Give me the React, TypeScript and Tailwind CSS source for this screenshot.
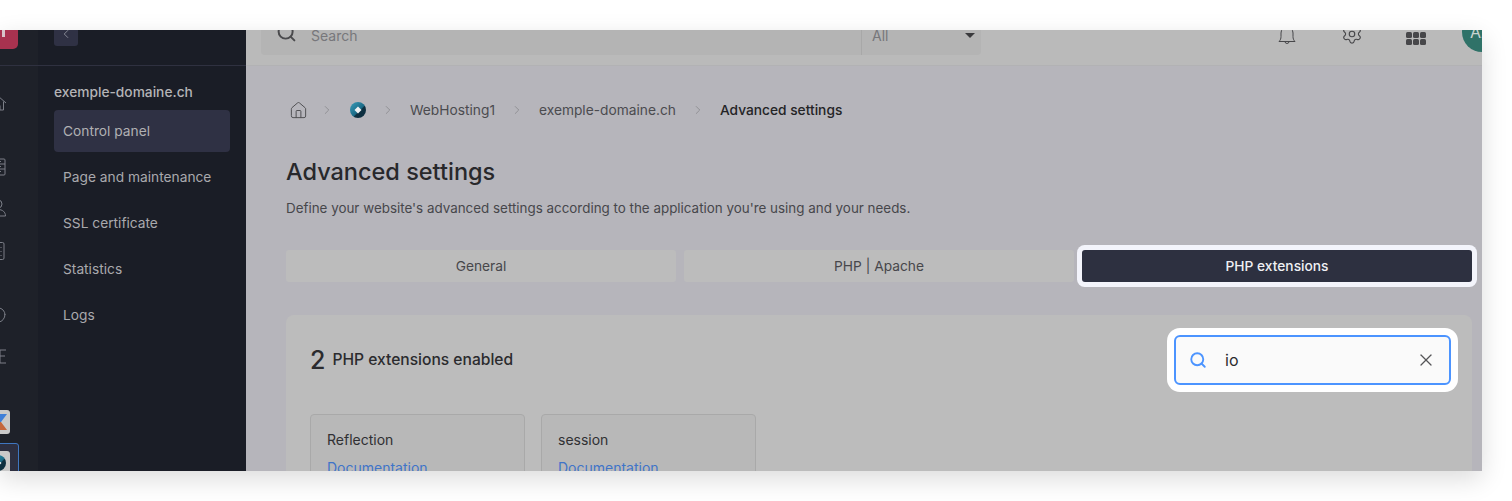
import { ChevronLeft, ChevronRight, House, Search, Settings, X } from "lucide-react";

const menu = ["Page and maintenance", "SSL certificate", "Statistics", "Logs"];

// rail icons are cut by the left edge of the capture, only the right part shows
function RailIcon({ children, top }: { children: React.ReactNode; top: string }) {
  return (
    <div className={`flex justify-center text-[#7c7f88] ${top}`}>
      <svg width="18" height="18" viewBox="0 0 18 18" fill="none" stroke="currentColor" strokeWidth="1">
        {children}
      </svg>
    </div>
  );
}

function Rail() {
  return (
    <div className="w-[38px] shrink-0 bg-[#1e2129] overflow-hidden">
      <div className="h-[36px] border-b border-[#2f3140] flex items-end pb-[16px]">
        <div className="w-[40px] h-[40px] -ml-[22px] shrink-0 rounded-[5px] bg-[#a8324f] flex items-center justify-end pr-[13px]">
          <span className="w-[3px] h-[16px] bg-[#d8c4ca]" />
        </div>
      </div>
      <div className="w-[40px] -ml-[22px]">
        <RailIcon top="mt-[28px]">
          <path d="M1 9l8-7 8 7M3.500 7.500V16h3.500v-4.500h4V16h3.500V7.500" />
        </RailIcon>
        <RailIcon top="mt-[46px]">
          <rect x="2" y="1" width="14" height="16" rx="1" />
          <path d="M2 6h14M2 11h14M6 3.500h6M6 8.500h6M6 13.500h6" />
        </RailIcon>
        <RailIcon top="mt-[23px]">
          <circle cx="9" cy="5" r="4" />
          <path d="M1.500 17c0-4 3-6.500 7.500-6.500s7.500 2.500 7.500 6.500z" />
        </RailIcon>
        <RailIcon top="mt-[25px]">
          <rect x="2" y="0.5" width="13" height="17" rx="1.5" />
          <path d="M12 5v1M12 9v1M12 13v1" />
        </RailIcon>
        <RailIcon top="mt-[46px]">
          <path d="M3 9a6.500 7 0 0 1 13 0" />
          <path d="M3 8a6.500 8 0 0 0 13 0" />
          <rect x="1" y="6" width="3" height="6" />
        </RailIcon>
        <RailIcon top="mt-[23px]">
          <path d="M1 3h16M3 9h13M9 3v6M11 3v13M1 16h16" />
        </RailIcon>
        <div className="mt-[45px] flex justify-center">
          <div className="w-[24px] h-[24px] rounded-[3px] bg-[#c9c9c9] overflow-hidden">
            <svg viewBox="0 0 24 24" className="w-full h-full">
              <path d="M6 4h15l-6 8H6z" fill="#3f7fd8" />
              <path d="M6 12h9l6 8H6z" fill="#c4673d" />
            </svg>
          </div>
        </div>
        <div className="mt-[9px] -ml-px w-[42px] h-[40px] rounded-[3px] bg-[#2d2f40] border border-[#3f76c0] flex justify-center pt-[7px]">
          <div className="w-[24px] h-[24px] rounded-[3px] bg-[#c9c9c9] flex items-center justify-center">
            <Logo />
          </div>
        </div>
      </div>
    </div>
  );
}

function Logo() {
  return (
    <svg viewBox="0 0 16 16" className="w-[16px] h-[16px]">
      <defs>
        <linearGradient id="logoFill" x1="0" y1="0" x2="1" y2="1">
          <stop offset="0" stopColor="#3a9dba" />
          <stop offset="0.55" stopColor="#1a6a86" />
          <stop offset="0.6" stopColor="#0d2f40" />
          <stop offset="1" stopColor="#0d2f40" />
        </linearGradient>
      </defs>
      <circle cx="8" cy="8" r="8" fill="url(#logoFill)" />
      <path d="M8 4.500l3.500 3.500L8 11.500 4.500 8z" fill="#eef1f3" />
    </svg>
  );
}

function Sidebar() {
  return (
    <div className="w-[208px] shrink-0 bg-[#1a1d26]">
      <div className="h-[36px] border-b border-[#2f3140] px-[16px] flex items-end pb-[19px]">
        <div className="w-[24px] h-[24px] shrink-0 rounded-[3px] bg-[#2f3144] flex items-center justify-center text-[#a6a8b0]">
          <ChevronLeft size={14} strokeWidth={1.25} />
        </div>
      </div>
      <div className="px-[16px] pt-[16px]">
        <div className="text-[13.75px] leading-[20px] font-medium text-[#b4b4b6]">exemple-domaine.ch</div>
        <div className="mt-[8px] h-[42px] rounded-[4px] bg-[#2f3144] px-[9px] flex items-center text-[13.75px] text-[#b0b0b3]">
          Control panel
        </div>
        {menu.map((m) => (
          <div key={m} className="mt-[4px] h-[42px] px-[9px] flex items-center text-[13.75px] text-[#a9a9ad]">
            {m}
          </div>
        ))}
      </div>
    </div>
  );
}

function Topbar() {
  return (
    <div className="h-[36px] bg-[#bababa] border-b border-[#b2b2b4] flex items-end pl-[15px] pb-[10px]">
      <div className="w-[720px] h-[40px] shrink-0 rounded-[4px] bg-[#b4b4b4] flex items-center text-[14px] text-[#77777b]">
        <Search size={21} strokeWidth={2.25} className="ml-[15px] -mt-[5px] text-[#4a4a4d]" />
        <span className="ml-[14px] flex-1">Search</span>
        <div className="w-[120px] h-full border-l border-[#a8a8a8] pl-[10px] pr-[6px] flex items-center justify-between">
          <span>All</span>
          <span className="w-0 h-0 border-x-[5px] border-x-transparent border-t-[5px] border-t-[#3a3a3d]" />
        </div>
      </div>
      <div className="flex items-start ml-auto text-[#47474a] h-[40px] -mr-[20px]">
        <svg width="18" height="20" viewBox="0 0 18 20" fill="none" stroke="currentColor" strokeWidth="1" className="mt-[11px]">
          <path d="M1 15.500c1.500-1.500 2-3 2-5V7a6 6 0 0 1 12 0v3.500c0 2 .5 3.500 2 5z" />
          <path d="M7 15.500a2 2 0 0 0 4 0" />
        </svg>
        <Settings size={22} strokeWidth={1.25} className="ml-[45px] mt-[8px]" />
        <div className="ml-[43px] mt-[17px] w-[20px] grid grid-cols-3 gap-[1px]">
          {Array.from({ length: 6 }).map((_, i) => (
            <span key={i} className="h-[6px] rounded-[1.5px] bg-[#47474a]" />
          ))}
        </div>
        <div className="ml-[36px] -mt-[3px] w-[40px] h-[40px] shrink-0 rounded-full bg-[#2f7268] text-[#c9d4d2] text-[16px] flex items-center pl-[8px]">
          AA
        </div>
      </div>
    </div>
  );
}

function Breadcrumb() {
  const sep = <ChevronRight size={14} strokeWidth={1} className="text-[#77777b]" />;
  return (
    <div className="flex items-center text-[13.75px] text-[#4b4b4f] h-[20px]">
      <House size={19} strokeWidth={1.25} className="ml-[3px] text-[#505053]" />
      <span className="ml-[12px]">{sep}</span>
      <span className="ml-[16px]"><Logo /></span>
      <span className="ml-[15px]">{sep}</span>
      <span className="ml-[15px]">WebHosting1</span>
      <span className="ml-[15px]">{sep}</span>
      <span className="ml-[15px]">exemple-domaine.ch</span>
      <span className="ml-[15px]">{sep}</span>
      <span className="ml-[15px] font-medium text-[#242426]">Advanced settings</span>
    </div>
  );
}

function ExtensionCard({ name }: { name: string }) {
  return (
    <div className="w-[215px] h-[100px] rounded-[4px] border border-[#a9a9a9] bg-[#b8b8b8] px-[16px] pt-[15px] text-[14px] leading-[20px]">
      <div className="text-[#303033]">{name}</div>
      <div className="mt-[8px] text-[#3f74c8]">Documentation</div>
    </div>
  );
}

export default function App() {
  return (
    <div className="h-[501px] bg-white pt-[30px] font-['Inter',sans-serif]">
      <div className="w-[1482px] h-[441px] flex overflow-hidden shadow-[0_8px_24px_rgba(0,0,0,0.14)]">
        <Rail />
        <Sidebar />
        <div className="flex-1 min-w-0 bg-[#b6b5bb]">
          <Topbar />
          <div className="pl-[40px] pr-[10px] pt-[34px]">
            <Breadcrumb />
            <h1 className="mt-[36px] text-[23.5px] leading-[32px] font-medium text-[#28282b]">Advanced settings</h1>
            <p className="mt-[10px] text-[13.4px] leading-[20px] text-[#47474b]">
              Define your website's advanced settings according to the application you're using and your needs.
            </p>
            <div className="mt-[32px] grid grid-cols-3 gap-[8px] text-[13.75px]">
              <div className="h-[32px] rounded-[3px] bg-[#bcbcbc] flex items-center justify-center text-[#47474b]">General</div>
              <div className="h-[32px] rounded-[3px] bg-[#bcbcbc] flex items-center justify-center text-[#47474b]">PHP | Apache</div>
              <div className="h-[32px] rounded-[3px] bg-[#2d3040] ring-[5px] ring-[#f3f4fb] flex items-center justify-center font-medium text-[#f0f0f4]">
                PHP extensions
              </div>
            </div>
            <div className="mt-[33px] rounded-t-[8px] bg-[#bcbcbc] px-[24px] pt-[20px]">
              <div className="flex items-center justify-between">
                <div className="flex items-center text-[#2b2b2e]">
                  <span className="text-[25px] leading-[48px] font-medium">2</span>
                  <span className="ml-[7px] text-[15.6px] font-medium">PHP extensions enabled</span>
                </div>
                <div className="-mr-[3px] w-[277px] h-[50px] rounded-[6px] border-2 border-[#4c94ff] bg-[#fafafa] ring-[7px] ring-white flex items-center text-[16px] text-[#2b2b2e]">
                  <Search size={18} strokeWidth={2.5} className="ml-[13px] text-[#4c94ff]" />
                  <span className="ml-[18px] flex-1">io</span>
                  <X size={20} strokeWidth={1.5} className="mr-[13px] text-[#555558]" />
                </div>
              </div>
              <div className="mt-[29px] flex gap-[16px]">
                <ExtensionCard name="Reflection" />
                <ExtensionCard name="session" />
              </div>
            </div>
          </div>
        </div>
      </div>
    </div>
  );
}
